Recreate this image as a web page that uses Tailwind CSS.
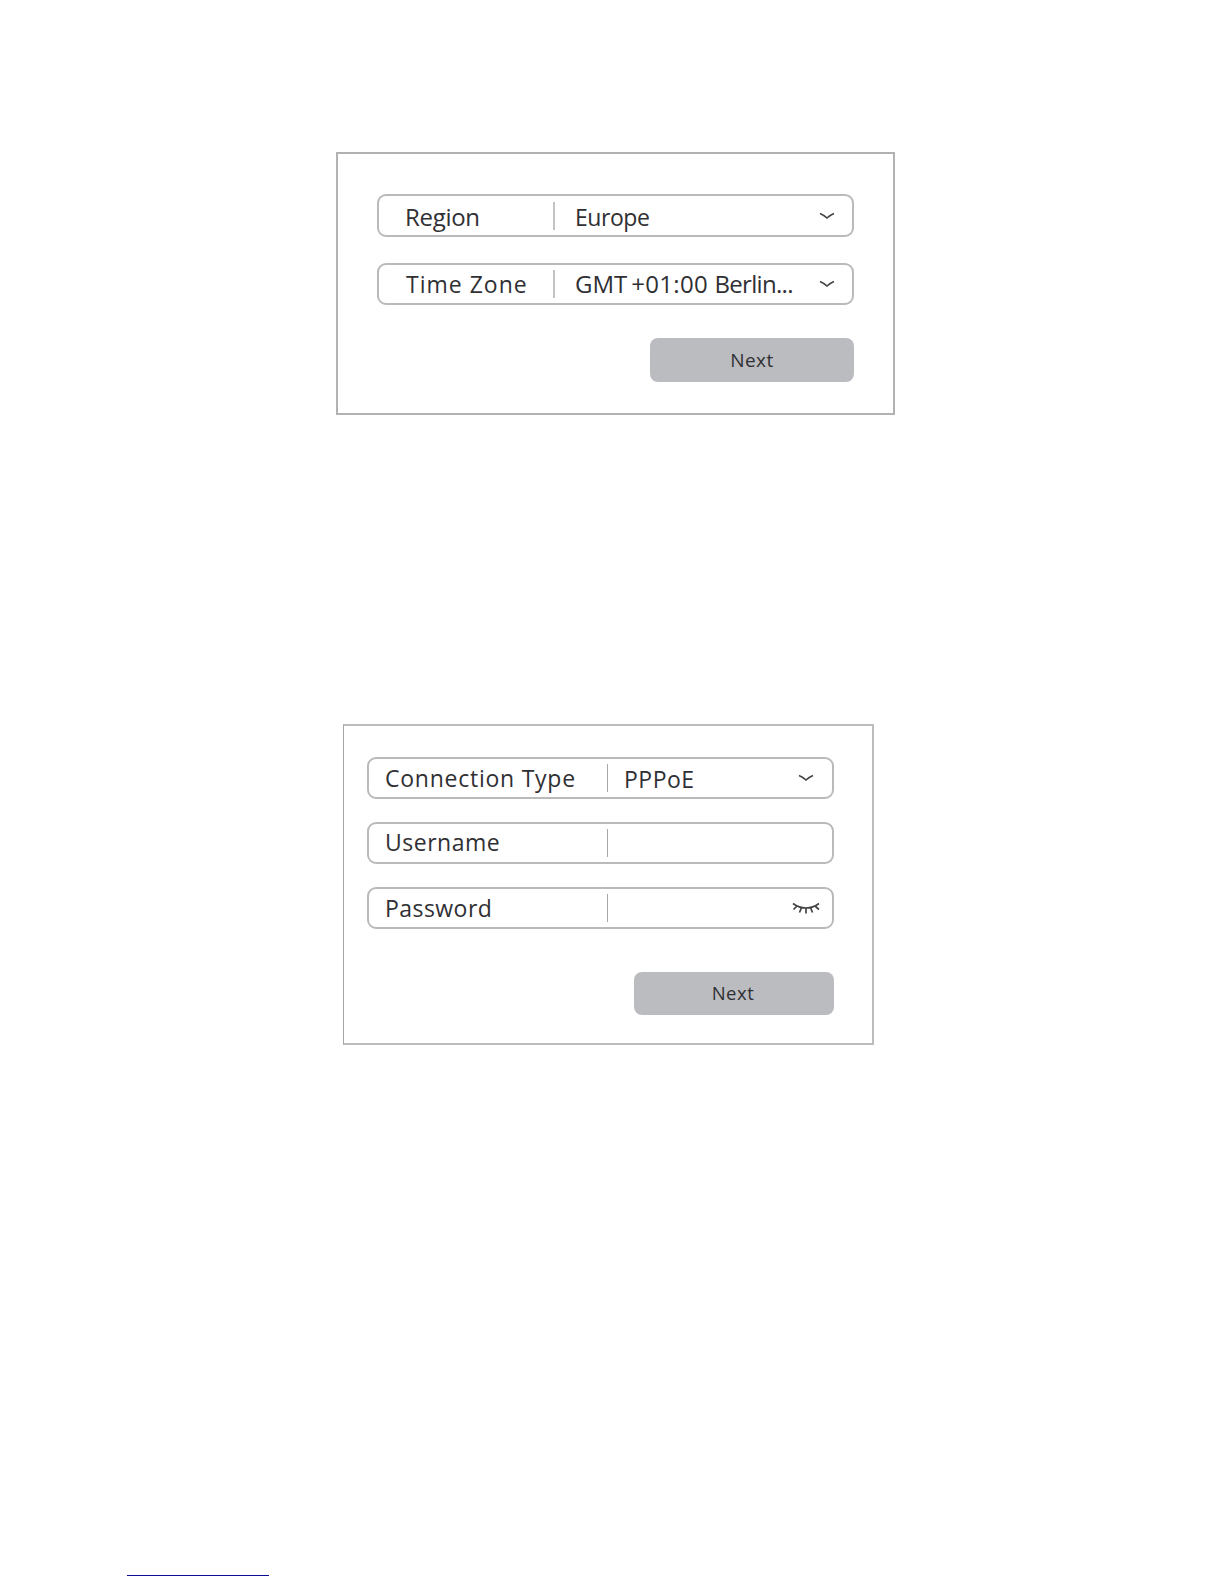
<!DOCTYPE html>
<html lang="en">
<head>
    <meta charset="UTF-8">
    <meta name="viewport" content="width=device-width, initial-scale=1.0">
    <title>Router Setup</title>
    <script src="https://cdn.jsdelivr.net/npm/@tailwindcss/browser@4"></script>
</head>
<body class="bg-white font-['Open_Sans',sans-serif] text-[#303034]">
    <main class="h-[1584px] flex flex-col items-start overflow-hidden">
        <!-- Time zone -->
        <section class="mt-[152px] ml-[336px] w-[559px] h-[263px] border-2 border-[#b2b2b2] pt-10 pl-[39px] pr-[39px]">
            <div class="h-[43px] flex items-center border-2 border-[#bababa] rounded-[9px] pl-[26px] pr-[17px] text-[24px]">
                <span class="w-[148px] pt-0.5 tracking-[-0.3px]">Region</span>
                <span class="w-0.5 h-7 bg-[#c4c4c4]"></span>
                <span class="flex-1 ml-5 pt-[3px] text-[23px] tracking-[-0.45px]">Europe</span>
                <svg class="w-4 h-2" viewBox="0 0 16 8" fill="none" stroke="#444" stroke-width="1.6"><path d="M1 1.5 Q5.5 3.5 8 6 Q10.5 3.5 15 1.5"/></svg>
            </div>
            <div class="mt-[26px] h-[42px] flex items-center border-2 border-[#bababa] rounded-[9px] pl-[27px] pr-[17px] text-[24px]">
                <span class="w-[147px] text-[23px] tracking-[1px]">Time Zone</span>
                <span class="w-0.5 h-7 bg-[#c4c4c4]"></span>
                <span class="flex-1 ml-5 whitespace-nowrap tracking-[-0.7px]"><span class="mr-1 tracking-normal">GMT</span><span class="tracking-[0.3px]">+01:00 </span>Berlin...</span>
                <svg class="w-4 h-2" viewBox="0 0 16 8" fill="none" stroke="#444" stroke-width="1.6"><path d="M1 1.5 Q5.5 3.5 8 6 Q10.5 3.5 15 1.5"/></svg>
            </div>
            <div class="mt-[33px] flex justify-end">
                <button class="w-[204px] h-11 rounded-lg bg-[#bbbcc0] text-[19px] tracking-[0.5px]">Next</button>
            </div>
        </section>

        <!-- Internet connection -->
        <section class="mt-[309px] ml-[343px] w-[531px] h-[321px] border-2 border-l border-[#bcbcbc] border-l-[#a4a4a4] pt-[31px] pl-[23px] pr-[38px] text-[23px]">
            <div class="h-[42px] flex items-center border-2 border-[#bababa] rounded-[9px] pl-4 pr-[18px]">
                <span class="w-[222px] tracking-[0.75px]">Connection Type</span>
                <span class="w-px h-7 bg-[#a8a8a8]"></span>
                <span class="flex-1 ml-4 pt-0.5 tracking-[0.5px]">PPPoE</span>
                <svg class="w-4 h-2" viewBox="0 0 16 8" fill="none" stroke="#444" stroke-width="1.6"><path d="M1 1.5 Q5.5 3.5 8 6 Q10.5 3.5 15 1.5"/></svg>
            </div>
            <div class="mt-[23px] h-[42px] flex items-center border-2 border-[#bababa] rounded-[9px] pl-4">
                <span class="w-[222px] pb-px tracking-[0.5px]">Username</span>
                <span class="w-px h-7 bg-[#a8a8a8]"></span>
            </div>
            <div class="mt-[23px] h-[42px] flex items-center border-2 border-[#bababa] rounded-[9px] pl-4 pr-3">
                <span class="w-[222px] tracking-[0.45px]">Password</span>
                <span class="w-px h-7 bg-[#a8a8a8]"></span>
                <svg class="ml-auto w-7 h-3" viewBox="0 0 28 12" fill="none" stroke="#444" stroke-width="1.7">
                    <path d="M1 1.5 Q7 6 14 6 Q21 6 27 1.5"/>
                    <path d="M5 4 L1.5 7.5 M9.5 5.5 L7.5 10.5 M14 6 V11.5 M18.5 5.5 L20.5 10.5 M23 4 L27 7.5"/>
                </svg>
            </div>
            <div class="mt-[43px] flex justify-end">
                <button class="w-[200px] h-[43px] rounded-lg bg-[#bbbcc0] pb-px pr-0.5 text-[18.5px] tracking-[0.5px]">Next</button>
            </div>
        </section>

        <div class="mt-[530px] ml-[127px] w-[142px] h-px shrink-0 bg-[#0c0c94]"></div>
    </main>
</body>
</html>
